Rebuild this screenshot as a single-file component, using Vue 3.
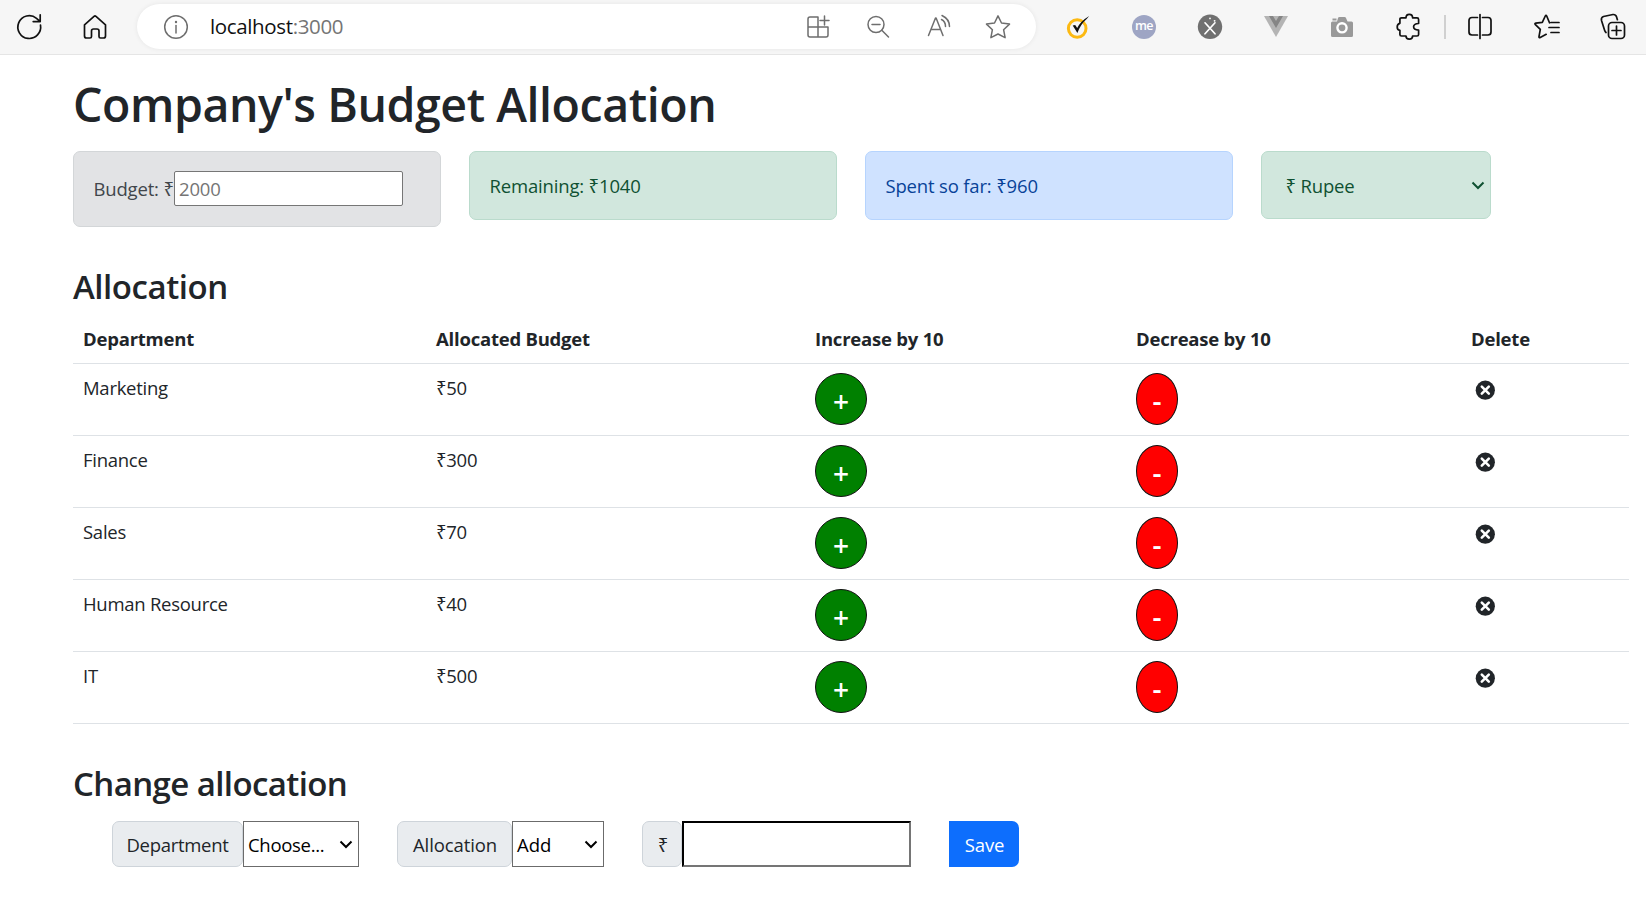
<script setup>
import { ref } from 'vue'

const expenses = ref([
  { name: 'Marketing', cost: 50 },
  { name: 'Finance', cost: 300 },
  { name: 'Sales', cost: 70 },
  { name: 'Human Resource', cost: 40 },
  { name: 'IT', cost: 500 },
])
</script>

<template>
  <header class="toolbar">
    <svg class="ico reload" viewBox="0 0 28 28"><path d="M25.5 12.2A11.4 11.4 0 1 1 21.5 5.3L25 8.4M25.2 1.8V8.6H18.2" /></svg>
    <svg class="ico home" viewBox="0 0 28 28"><path d="M3.5 11.8 13 3.4q1-.8 2 0l9.500 8.400V23q0 2-2 2h-3q-1.500 0-1.500-1.500V18q0-2-2-2h-3.500q-2 0-2 2v5.500Q10.500 25 9 25H5.500q-2 0-2-2z" /></svg>
    <div class="address">
      <svg class="ico grey info" viewBox="0 0 28 28"><circle cx="14" cy="14" r="11.3" /><path d="M14 12.500v7.500" /><circle class="dot" cx="14" cy="9" r="1.200" /></svg>
      <span class="url">localhost<span class="port">:3000</span></span>
      <svg class="ico grey apps" viewBox="0 0 28 28"><path d="M14 4H6Q4 4 4 6V22q0 2 2 2H22q2 0 2-2V14H4M14 4V24M20.500 3v9M16 7.500h9" /></svg>
      <svg class="ico grey zoomout" viewBox="0 0 28 28"><circle cx="12" cy="11.500" r="8" /><path d="M8 11.500h8M17.800 17.300 24.500 24" /></svg>
      <svg class="ico grey aloud" viewBox="0 0 28 28"><path d="M3.500 22.500 10.500 5h.6L18 22.500M6 16.500h9.500M16.500 6.500q4 2 4 7M17 2.500q7.500 3.500 7.500 11" /></svg>
      <svg class="ico grey star" viewBox="0 0 28 28"><path d="m14 2.800 3.500 7.200 8 1.100-5.900 5.600 1.500 8L14 21l-7.100 3.700 1.500-8-5.900-5.600 8-1.100z" /></svg>
    </div>
    <svg class="ico ext-check" viewBox="0 0 28 28"><circle class="ring" cx="13.200" cy="15.500" r="8.800" /><path class="tick" d="M8.700 12.500 13.400 20Q16.700 11 22.700 6L25.200 3Q16.700 8 13.200 15L11.200 12z" /></svg>
    <div class="me">me</div>
    <svg class="ico ext-x" viewBox="0 0 28 28"><circle cx="14" cy="13.800" r="12.200" /><path d="m9 9.800 10 11M19 9.800l-10 11" /><path class="spark" d="M14 5.300v.2M18.500 7.800h.2" /></svg>
    <svg class="ico ext-v" viewBox="0 0 28 28"><path class="light" d="M2 3h24L14 24z" /><path class="dark" d="M7 3h4l3 5 3-5h4l-7 12z" /></svg>
    <svg class="ico ext-cam" viewBox="0 0 28 28"><path class="body" d="M10 5q.3-1 1.500-1h5q1.200 0 1.500 1l1.500 3.500H23.500q1.500 0 1.500 1.500v12.500q0 1.500-1.500 1.500h-19Q3 24 3 22.500V10q0-1.500 1.500-1.500H9zM4.500 5.500h4v2h-4z" /><circle cx="14" cy="14.800" r="4.600" /></svg>
    <svg class="ico puzzle" viewBox="0 0 28 28"><path d="M6.500 4.800H11q0-3.400 3.300-3.400t3.300 3.400H22q1.600 0 1.600 1.600V10.500q-5 .2-5 3.300t5 3.300v4.300q0 1.600-1.600 1.600h-4.400q0 3.200-3.300 3.200T11 23H6.500q-1.600 0-1.600-1.600V17.300Q2.200 17 2.200 13.900t2.700-3.600V6.400q0-1.600 1.600-1.600z" /></svg>
    <i class="divider"></i>
    <svg class="ico split" viewBox="0 0 28 28"><path d="M11.500 4.500H6Q3 4.500 3 7.500v11.500q0 3 3 3h5.500M16.500 4.500H22q3 0 3 3v11.500q0 3-3 3h-5.500M14 1.500v24" /></svg>
    <svg class="ico favs" viewBox="0 0 28 28"><path d="M16.500 9.800 13.700 3q-.7-1.500-1.400 0L9.300 9.300l-6.500.9q-1.600.3-.4 1.500l4.900 4.700-1.300 7.300q-.1 1.500 1.200.8l6-3.200M18 9.500h8M16 14.500h10M18 19.500h8" /></svg>
    <svg class="ico collect" viewBox="0 0 28 28"><rect x="9.500" y="9.500" width="16" height="16" rx="3.500" /><path d="M17.500 13v9M13 17.500h9M7 19.500q-1-.7-1.400-2.200L2.500 7.500q-.7-3 2-4L14 1.500q2.700-.2 3.500 2.200l.9 3" /></svg>
  </header>

  <main class="page">
    <h1>Company's Budget Allocation</h1>
    <section class="summary">
      <div class="card budget"><span>Budget: ₹</span><input type="number" placeholder="2000"></div>
      <div class="card green">Remaining: ₹1040</div>
      <div class="card blue">Spent so far: ₹960</div>
      <div class="card green currency"><span>₹ Rupee</span><svg class="chev" viewBox="0 0 14 9"><path d="m1.500 1.500 5.500 5.500 5.500-5.500" /></svg></div>
    </section>

    <h3 class="h-alloc">Allocation</h3>
    <table>
      <colgroup><col class="c1"><col class="c2"><col class="c3"><col class="c4"><col class="c5"></colgroup>
      <thead>
        <tr><th>Department</th><th>Allocated Budget</th><th>Increase by 10</th><th>Decrease by 10</th><th>Delete</th></tr>
      </thead>
      <tbody>
        <tr v-for="e in expenses" :key="e.name">
          <td>{{ e.name }}</td>
          <td>₹{{ e.cost }}</td>
          <td><button class="round plus" @click="e.cost += 10">+</button></td>
          <td><button class="round minus" @click="e.cost -= 10">-</button></td>
          <td><svg class="del" viewBox="0 0 20 20"><circle cx="10.300" cy="10.200" r="9.600" /><path d="m6.800 6.700 7 7M13.800 6.700l-7 7" /></svg></td>
        </tr>
      </tbody>
    </table>

    <h3 class="h-change">Change allocation</h3>
    <form class="change" @submit.prevent>
      <label class="tag dept">Department</label>
      <div class="select s1"><span>Choose...</span><svg class="chev" viewBox="0 0 14 9"><path d="m1.500 1.500 5.500 5.500 5.500-5.500" /></svg></div>
      <label class="tag alloc">Allocation</label>
      <div class="select s2"><span>Add</span><svg class="chev" viewBox="0 0 14 9"><path d="m1.500 1.500 5.500 5.500 5.500-5.500" /></svg></div>
      <label class="tag cur">₹</label>
      <input class="amount" type="number">
      <button class="save">Save</button>
    </form>
  </main>
</template>

<style>
html, body { background: #fff; overflow: hidden; }
</style>

<style scoped>
* { box-sizing: border-box; }
.toolbar, .page, input, button { font-family: "Open Sans", "Noto Sans", sans-serif; }

.toolbar { height: 55px; background: #f6f6f6; border-bottom: 1px solid #e5e5e5; display: flex; align-items: center; padding: 0 18px 1px 15px; }
.ico { width: 28px; height: 28px; flex: none; fill: none; stroke: #111; stroke-width: 1.7; stroke-linecap: round; stroke-linejoin: round; }
.grey { stroke: #6e6e6e; stroke-width: 1.5; }
.home { margin-left: 38px; }
.address { width: 899px; height: 45px; margin-left: 28px; border-radius: 23px; background: #fff; box-shadow: 0 0 5px rgba(0,0,0,.07); display: flex; align-items: center; padding-left: 25px; flex: none; }
.info .dot { fill: #6e6e6e; stroke: none; }
.url { width: 594px; margin: -2px 0 0 20px; font-size: 20.500px; line-height: 28px; color: #111; letter-spacing: -.36px; }
.port { color: #757575; }
.zoomout { margin-left: 32px; }
.aloud { margin-left: 33px; }
.star { margin-left: 31px; }
.ext-check { margin-left: 28px; }
.ring { stroke: #fcb912; stroke-width: 3; }
.tick { fill: #111; stroke: none; }
.me { width: 24px; height: 24px; border-radius: 50%; background: #9ea5c4; color: #fff; font-size: 12.500px; font-weight: 600; line-height: 21px; text-align: center; letter-spacing: -.6px; margin-left: 40px; flex: none; }
.ext-x { margin-left: 40px; stroke: #fff; }
.ext-x circle { fill: #707070; stroke: none; }
.ext-v { margin-left: 38px; stroke: none; }
.light { fill: #b4b4b4; }
.dark { fill: #858585; }
.ext-cam { margin-left: 38px; stroke: none; }
.body { fill: #999; }
.ext-cam circle { stroke: #fff; stroke-width: 2.400; fill: #999; }
.puzzle { margin-left: 39px; }
.divider { width: 2px; height: 24px; background: #d0d0d0; margin-left: 21px; }
.split { margin-left: 20px; }
.favs { margin-left: 39px; }
.collect { margin-left: 38px; }

.page { padding: 0 17px 0 73px; color: #212529; font-size: 18.500px; }
h1, h3 { margin: 0; font-weight: 550; }
h1 { font-size: 46.500px; line-height: 58px; height: 58px; margin-top: 20px; letter-spacing: -.44px; white-space: nowrap; }
.summary { display: flex; align-items: flex-start; gap: 28px; margin-top: 18px; height: 76px; }
.card { width: 368px; height: 69px; border: 1px solid; border-radius: 7px; padding: 0 19.500px; display: flex; align-items: center; letter-spacing: -.17px; white-space: nowrap; }
.budget { height: 76px; background: #e2e3e5; border-color: #d3d6d8; color: #41464b; }
.budget span { width: 80.500px; margin-top: -2px; }
.budget input { width: 229px; height: 35px; margin-top: -2px; border: 1px solid #767676; border-radius: 2px; padding: 0 4px; font-size: 18.500px; letter-spacing: -.2px; outline: none; background: #fff; }
input::placeholder { color: #757575; }
.green { background: #d1e7dd; border-color: #badbcc; color: #0f5132; }
.blue { background: #cfe2ff; border-color: #b6d4fe; color: #084298; }
.currency { width: 230px; height: 68px; padding: 0 5px 0 23.500px; justify-content: space-between; }
.chev { width: 14px; height: 9px; fill: none; stroke: currentColor; stroke-width: 2; flex: none; }
.h-alloc, .h-change { font-size: 33px; line-height: 40px; height: 40px; letter-spacing: -.45px; }
.h-change { letter-spacing: -.6px; }
.h-alloc { margin-top: 40px; }
table { border-collapse: separate; border-spacing: 0; table-layout: fixed; width: 1556px; margin-top: 9px; }
.c1 { width: 353px; } .c2 { width: 379px; } .c3 { width: 321px; } .c4 { width: 335px; } .c5 { width: 168px; }
th, td { text-align: left; padding: 9px 10px 0; border-bottom: 1px solid #dee2e6; vertical-align: top; line-height: 29px; white-space: nowrap; }
th { height: 48px; padding-top: 8px; font-weight: 700; letter-spacing: -.22px; }
td { height: 72px; letter-spacing: -.27px; }
.round { display: block; height: 52px; border: 1px solid #111; border-radius: 50%; color: #fff; font-weight: 600; font-size: 28px; line-height: 48px; padding: 3px 0 0; text-align: center; }
.plus { width: 52px; background: #008000; }
.minus { width: 42px; background: red; padding-top: 1px; }
.del { display: block; width: 20px; height: 20px; margin: 7px 0 0 4px; fill: #212529; overflow: visible; }
.del path { stroke: #fff; stroke-width: 2.600; stroke-linecap: round; }
.h-change { margin-top: 40px; }
.change { display: flex; height: 46px; margin: 17px 0 0 39px; }
.tag { display: flex; align-items: center; justify-content: center; background: #e9ecef; border: 1px solid #ced4da; border-radius: 7px; letter-spacing: -.3px; }
.dept { width: 131px; } .alloc { width: 115px; margin-left: 38px; padding-left: 1px; letter-spacing: -.1px; } .cur { width: 40px; margin-left: 38px; padding-left: 2px; }
.select { display: flex; align-items: center; justify-content: space-between; border: 1px solid #6b6b6b; background: #fff; color: #000; padding: 0 5px 0 4px; letter-spacing: -.3px; }
.s1 { width: 116px; } .s2 { width: 92px; letter-spacing: 0; }
.amount { width: 229px; border: 2px inset #767676; border-color: #212121 #757575 #757575 #212121; border-radius: 0; outline: none; }
.save { width: 70px; margin-left: 38px; border: 0; background: #0d6efd; color: #fff; font-size: 18.500px; letter-spacing: -.2px; border-radius: 0 7px 7px 0; padding: 0 0 0 1px; }
</style>
